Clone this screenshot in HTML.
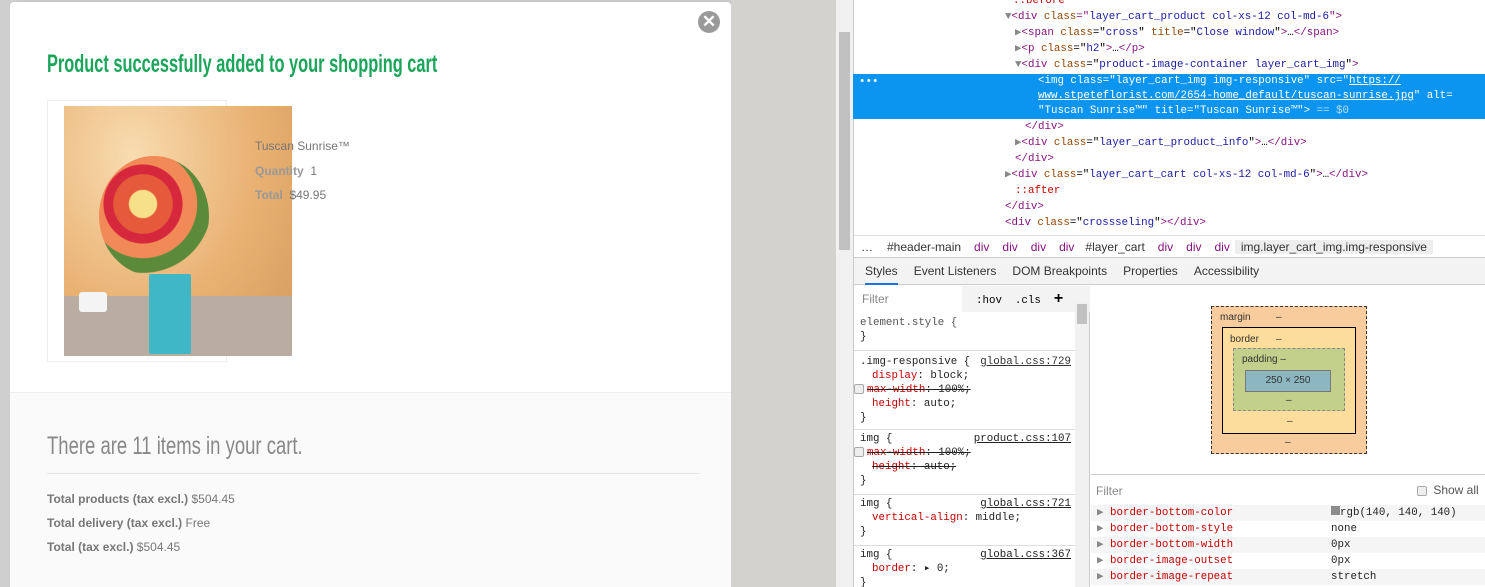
<!DOCTYPE html>
<html><head><meta charset="utf-8"><style>
*{margin:0;padding:0;box-sizing:border-box}
html,body{width:1485px;height:587px;overflow:hidden}
body{position:relative;background:#c9c9c9;font-family:"Liberation Sans",sans-serif}
.a{position:absolute}
.mono{font-family:"Liberation Mono","DejaVu Sans Mono",monospace;font-size:10.8px;white-space:nowrap}
.dom div{position:absolute;height:16px;line-height:16px}
.t{color:#881280}.at{color:#994500}.v{color:#1a1aa6}.g{color:#888}
.sec{position:absolute;left:0;width:221px;border-top:1px solid #ddd;padding-left:6px}
.sec div{height:14px;line-height:14px}
.p{color:#c80000}.src{position:absolute;right:4px;text-decoration:underline;color:#222}
.cb{display:inline-block;width:10px;height:10px;border:1px solid #aaa;border-radius:2px;background:#eee;vertical-align:middle;margin-right:3px}
.cr{display:flex;height:16px;line-height:16px;padding-left:6px}
</style></head><body>
<div class="a" style="left:0;top:0;width:17px;height:587px;background:#cfcfcf"></div>
<div class="a" style="left:731px;top:0;width:105px;height:587px;background:#d4d2cc"></div>
<div class="a" style="left:836px;top:0;width:17px;height:587px;background:#f1f1f1"></div>
<div class="a" style="left:839px;top:32px;width:11px;height:218px;background:#c1c1c1"></div>
<div class="a" style="left:10px;top:2px;width:721px;height:600px;background:#fff;border-radius:4px"></div>
<div class="a" style="left:10px;top:392px;width:721px;height:200px;background:#fafafa;border-top:1px solid #eee"></div>
<div class="a" style="left:698px;top:11px;width:22px;height:22px;border-radius:50%;background:#9a9a9a;color:#fff;font-weight:bold;font-size:17px;line-height:22px;text-align:center">✕</div>
<div class="a" style="left:47px;top:47px;font-size:25px;font-weight:bold;color:#1aa55a;white-space:nowrap;transform:scaleX(.655);transform-origin:left top;line-height:34px">Product successfully added to your shopping cart</div>
<div class="a" style="left:47px;top:100px;width:180px;height:262px;border:1px solid #eee"></div>
<div class="a" style="left:64px;top:106px;width:228px;height:250px;background:radial-gradient(ellipse at 30% 20%,#f8dcb0,#e9b172 55%,#d19a5c);overflow:hidden">
 <div class="a" style="left:0;top:190px;width:228px;height:60px;background:#b8ada0"></div>
 <div class="a" style="left:85px;top:168px;width:42px;height:80px;background:#3fb7c7;border-radius:2px"></div>
 <div class="a" style="left:35px;top:50px;width:110px;height:120px;border-radius:50%;background:radial-gradient(circle at 40% 40%,#f7e08a 0 14%,#e55a3a 15% 30%,#d6283c 31% 40%,#f28a58 41% 55%,#5a8a3a 56% 70%,transparent 71%)"></div>
 <div class="a" style="left:15px;top:186px;width:28px;height:20px;background:#f4f4f4;border-radius:3px"></div>
</div>
<div class="a" style="left:255px;top:139px;font-size:12px;color:#777">Tuscan Sunrise™</div>
<div class="a" style="left:255px;top:164px;font-size:12px;color:#777"><b style="color:#999">Quantity</b>&nbsp; 1</div>
<div class="a" style="left:255px;top:188px;font-size:12px;color:#777"><b style="color:#999">Total</b>&nbsp; $49.95</div>
<div class="a" style="left:47px;top:430px;font-size:25px;color:#888;white-space:nowrap;transform:scaleX(.74);transform-origin:left top;line-height:32px">There are 11 items in your cart.</div>
<div class="a" style="left:47px;top:473px;width:653px;border-top:1px solid #e5e5e5"></div>
<div class="a" style="left:47px;top:487px;font-size:12px;color:#777;line-height:24px"><b>Total products (tax excl.)</b> $504.45<br><b>Total delivery (tax excl.)</b> Free<br><b>Total (tax excl.)</b> $504.45</div>
<div class="a" style="left:853px;top:0;width:632px;height:587px;background:#fff;border-left:1px solid #ccc"></div>
<div class="a mono dom" style="left:855px;top:0;width:630px;height:235px">
 <div style="left:158px;top:-7px;color:#c80000">::before</div>
 <div style="left:150px;top:9px"><span class="g">▼</span><span class="t">&lt;div </span><span class="at">class</span><span class="t">="</span><span class="v">layer_cart_product col-xs-12 col-md-6</span><span class="t">"&gt;</span></div>
 <div style="left:160px;top:25px"><span class="g">▶</span><span class="t">&lt;span </span><span class="at">class</span>="<span class="v">cross</span>" <span class="at">title</span>="<span class="v">Close window</span>"<span class="t">&gt;</span>…<span class="t">&lt;/span&gt;</span></div>
 <div style="left:160px;top:41px"><span class="g">▶</span><span class="t">&lt;p </span><span class="at">class</span>="<span class="v">h2</span>"<span class="t">&gt;</span>…<span class="t">&lt;/p&gt;</span></div>
 <div style="left:160px;top:57px"><span class="g">▼</span><span class="t">&lt;div </span><span class="at">class</span>="<span class="v">product-image-container layer_cart_img</span>"<span class="t">&gt;</span></div>
 <div style="left:-2px;top:74px;width:632px;height:45px;background:#0b95f0"></div>
 <div style="left:4px;top:74px;color:#fff">•••</div>
 <div style="left:183px;top:74px;color:#fff;line-height:15px;height:45px">&lt;img class="layer_cart_img img-responsive" src="<u>https://</u><br><u>www.stpeteflorist.com/2654-home_default/tuscan-sunrise.jpg</u>" alt=<br>"Tuscan Sunrise™" title="Tuscan Sunrise™"&gt; <span style="color:#bde">== $0</span></div>
 <div style="left:170px;top:119px" class="t">&lt;/div&gt;</div>
 <div style="left:160px;top:135px"><span class="g">▶</span><span class="t">&lt;div </span><span class="at">class</span>="<span class="v">layer_cart_product_info</span>"<span class="t">&gt;</span>…<span class="t">&lt;/div&gt;</span></div>
 <div style="left:160px;top:151px" class="t">&lt;/div&gt;</div>
 <div style="left:150px;top:167px"><span class="g">▶</span><span class="t">&lt;div </span><span class="at">class</span>="<span class="v">layer_cart_cart col-xs-12 col-md-6</span>"<span class="t">&gt;</span>…<span class="t">&lt;/div&gt;</span></div>
 <div style="left:160px;top:183px;color:#c80000">::after</div>
 <div style="left:150px;top:199px" class="t">&lt;/div&gt;</div>
 <div style="left:150px;top:215px"><span class="t">&lt;div </span><span class="at">class</span>="<span class="v">crossseling</span>"<span class="t">&gt;&lt;/div&gt;</span></div>
</div>
<div class="a" style="left:854px;top:235px;width:631px;height:23px;background:#fff;border-top:1px solid #ddd;border-bottom:1px solid #ccc;font-size:12px;line-height:22px;white-space:nowrap;color:#333">
 <span style="margin-left:7px">…</span><span style="margin-left:14px">#header-main</span><span class="t" style="margin-left:13px">div</span><span class="t" style="margin-left:13px">div</span><span class="t" style="margin-left:13px">div</span><span class="t" style="margin-left:13px">div</span><span style="margin-left:11px">#layer_cart</span><span class="t" style="margin-left:13px">div</span><span class="t" style="margin-left:13px">div</span><span class="t" style="margin-left:13px">div</span><span style="margin-left:5px;background:#eee;padding:0 6px">img.layer_cart_img.img-responsive</span>
</div>
<div class="a" style="left:854px;top:258px;width:631px;height:27px;background:#f3f3f3;border-bottom:1px solid #ccc;font-size:12px;line-height:27px;color:#333;white-space:nowrap">
 <span style="margin-left:11px;border-bottom:2px solid #1a73e8;padding-bottom:5px">Styles</span><span style="margin-left:16px">Event Listeners</span><span style="margin-left:16px">DOM Breakpoints</span><span style="margin-left:16px">Properties</span><span style="margin-left:16px">Accessibility</span>
</div>
<div class="a" style="left:854px;top:286px;width:236px;height:301px;background:#fff;border-right:1px solid #ccc">
 <div class="a" style="left:0;top:0;width:236px;height:26px;background:#f3f3f3;font-size:12px;line-height:26px;white-space:nowrap"><span style="display:inline-block;background:#fff;width:108px;padding-left:8px;color:#888">Filter</span><span style="margin-left:14px" class="mono">:hov&nbsp; .cls&nbsp; <b style="font-size:16px">+</b></span></div>
 <div class="a" style="left:221px;top:16px;width:14px;height:285px;background:#f1f1f1"></div>
 <div class="a" style="left:223px;top:18px;width:10px;height:20px;background:#c1c1c1"></div>
 <div class="mono" style="position:absolute;top:28px;left:0;width:220px;color:#222">
  <div class="sec" style="top:0;border:0;height:36px;padding-top:2px"><div style="color:#555">element.style {</div><div>}</div></div>
  <div class="sec" style="top:36px;height:79px;padding-top:4px"><div>.img-responsive { <span class="src" style="color:#333">global.css:729</span></div><div style="padding-left:12px"><span class="p">display</span>: block;</div><div style="margin-left:-6px"><span class="cb"></span><s><span class="p">max-width</span>: 100%;</s></div><div style="padding-left:12px"><span class="p">height</span>: auto;</div><div>}</div></div>
  <div class="sec" style="top:115px;height:65px;padding-top:2px"><div>img { <span class="src">product.css:107</span></div><div style="margin-left:-6px"><span class="cb"></span><s><span class="p">max-width</span>: 100%;</s></div><div style="padding-left:12px"><s><span class="p">height</span>: auto;</s></div><div>}</div></div>
  <div class="sec" style="top:180px;height:51px;padding-top:2px"><div>img { <span class="src">global.css:721</span></div><div style="padding-left:12px"><span class="p">vertical-align</span>: middle;</div><div>}</div></div>
  <div class="sec" style="top:231px;height:60px;padding-top:2px"><div>img { <span class="src">global.css:367</span></div><div style="padding-left:12px"><span class="p">border</span>: ▸ 0;</div><div>}</div></div>
 </div>
</div>
<div class="a" style="left:1211px;top:306px;width:156px;height:148px;background:#f9cc9d;border:1px dashed #333;font-size:10px;color:#333">
 <span class="a" style="left:8px;top:5px">margin</span><span class="a" style="left:64px;top:5px">–</span>
 <div class="a" style="left:10px;top:20px;width:134px;height:107px;background:#fddd9b;border:1px solid #000">
  <span class="a" style="left:7px;top:6px">border</span><span class="a" style="left:53px;top:6px">–</span>
  <div class="a" style="left:10px;top:20px;height:63px;background:#c3d08b;border:1px dashed #888;width:112px">
   <span class="a" style="left:8px;top:5px">padding –</span>
   <div class="a" style="left:11px;top:21px;height:22px;background:#8cb6c0;border:1px solid #777;text-align:center;line-height:20px;width:86px">250 × 250</div>
   <span class="a" style="left:52px;top:46px">–</span>
  </div>
  <span class="a" style="left:64px;top:88px">–</span>
 </div>
 <span class="a" style="left:73px;top:130px">–</span>
</div>
<div class="a" style="left:1091px;top:474px;width:394px;height:113px;background:#fff;border-top:1px solid #ccc">
 <div class="a" style="left:5px;top:9px;font-size:12px;color:#888">Filter</div>
 <div class="a" style="left:326px;top:8px;font-size:12px;color:#555"><span class="cb"></span> Show all</div>
 <div class="mono a" style="left:0;top:30px;width:394px;color:#222">
  <div class="cr" style="background:#f5f5f5"><span style="width:234px"><span class="g">▶</span> <span class="p">border-bottom-color</span></span><span><span style="display:inline-block;width:9px;height:9px;background:#8c8c8c"></span>rgb(140, 140, 140)</span></div>
  <div class="cr"><span style="width:234px"><span class="g">▶</span> <span class="p">border-bottom-style</span></span>none</div>
  <div class="cr" style="background:#f5f5f5"><span style="width:234px"><span class="g">▶</span> <span class="p">border-bottom-width</span></span>0px</div>
  <div class="cr"><span style="width:234px"><span class="g">▶</span> <span class="p">border-image-outset</span></span>0px</div>
  <div class="cr" style="background:#f5f5f5"><span style="width:234px"><span class="g">▶</span> <span class="p">border-image-repeat</span></span>stretch</div>
 </div>
</div>
</body></html>
